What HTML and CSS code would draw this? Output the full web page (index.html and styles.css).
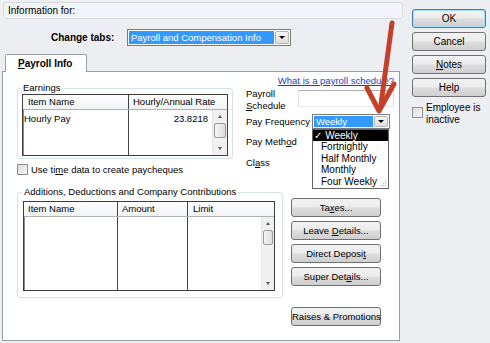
FILE: index.html
```html
<!DOCTYPE html>
<html lang="en">
<head>
  <meta charset="UTF-8" />
  <title>Payroll Info</title>
  <link rel="stylesheet" href="styles.css">
</head>
<body>
  <div class="window">
    <div class="main">
      <div class="info-bar">Information for:</div>

      <div class="change-row">
        <span class="change-label">Change tabs:</span>
        <div class="combo combo-tabs">
          <span class="combo-value">Payroll and Compensation Info</span>
          <span class="combo-btn"><i class="tri"></i></span>
        </div>
      </div>

      <div class="tab"><u>P</u>ayroll Info</div>

      <div class="panel">
        <div class="upper">
          <div class="left-col">
            <fieldset class="group earnings">
              <legend>Earnings</legend>
              <div class="list">
                <div class="list-head">
                  <div class="cell e-item">Item Name</div>
                  <div class="cell e-rate">Hourly/Annual Rate</div>
                </div>
                <div class="list-body">
                  <div class="col e-item"><div class="row">Hourly Pay</div></div>
                  <div class="col e-rate"><div class="row num">23.8218</div></div>
                  <div class="scrollbar">
                    <span class="sb-arrow"><i class="tri-up"></i></span>
                    <span class="sb-thumb"></span>
                    <span class="sb-fill"></span>
                    <span class="sb-arrow"><i class="tri-down"></i></span>
                  </div>
                </div>
              </div>
            </fieldset>
            <div class="check-row">
              <span class="checkbox"></span>
              <span>Use ti<u>m</u>e data to create paycheques</span>
            </div>
          </div>

          <div class="fields">
            <a class="help-link">What is a payroll schedule?</a>
            <div class="field schedule-field">
              <span class="field-label">Payroll<br><u>S</u>chedule</span>
              <div class="textbox"></div>
            </div>
            <div class="field freq-field">
              <span class="field-label">Pay Frequency</span>
              <div class="combo combo-freq">
                <span class="combo-value">Weekly</span>
                <span class="combo-btn"><i class="tri"></i></span>
                <ul class="dropdown">
                  <li class="selected">✓ Weekly</li>
                  <li>Fortnightly</li>
                  <li>Half Monthly</li>
                  <li>Monthly</li>
                  <li>Four Weekly</li>
                  <svg class="grip" width="7" height="7" viewBox="0 0 7 7">
                    <rect x="5" y="1" width="1" height="1" fill="#b5b5b5"/>
                    <rect x="3" y="3" width="1" height="1" fill="#b5b5b5"/>
                    <rect x="5" y="3" width="1" height="1" fill="#b5b5b5"/>
                    <rect x="1" y="5" width="1" height="1" fill="#b5b5b5"/>
                    <rect x="3" y="5" width="1" height="1" fill="#b5b5b5"/>
                    <rect x="5" y="5" width="1" height="1" fill="#b5b5b5"/>
                  </svg>
                </ul>
              </div>
            </div>
            <div class="field method-field"><span class="field-label">Pay Meth<u>o</u>d</span></div>
            <div class="field class-field"><span class="field-label">Cl<u>a</u>ss</span></div>
          </div>
        </div>

        <div class="lower">
          <fieldset class="group additions">
            <legend>Additions, Deductions and Company Contributions</legend>
            <div class="list">
              <div class="list-head">
                <div class="cell a-item">Item Name</div>
                <div class="cell a-amount">Amount</div>
                <div class="cell a-limit">Limit</div>
              </div>
              <div class="list-body">
                <div class="col a-item"></div>
                <div class="col a-amount"></div>
                <div class="col a-limit"></div>
                <div class="scrollbar narrow">
                  <span class="sb-arrow"><i class="tri-up"></i></span>
                  <span class="sb-thumb"></span>
                  <span class="sb-fill"></span>
                  <span class="sb-arrow"><i class="tri-down"></i></span>
                </div>
              </div>
            </div>
          </fieldset>

          <div class="btn-col">
            <button class="btn">Ta<u>x</u>es...</button>
            <button class="btn">Leave <u>D</u>etails...</button>
            <button class="btn">Direct Deposi<u>t</u></button>
            <button class="btn">Super Det<u>a</u>ils...</button>
            <button class="btn btn-raises">Raises &amp; Promotions</button>
          </div>
        </div>
      </div>
    </div>

    <div class="side">
      <button class="btn btn-default">OK</button>
      <button class="btn">Cancel</button>
      <button class="btn"><u>N</u>otes</button>
      <button class="btn">Help</button>
      <div class="check-row side-check">
        <span class="checkbox"></span>
        <span>Employee is<br>inactive</span>
      </div>
    </div>
  </div>

  <!-- red annotation arrow -->
  <svg class="arrow" width="490" height="343" viewBox="0 0 490 343">
    <path d="M392 23 L381 104" stroke="#c4402b" stroke-width="5" stroke-linecap="round" fill="none"/>
    <path d="M367 88 L379 111 L394 84" stroke="#c4402b" stroke-width="5" stroke-linecap="round" stroke-linejoin="round" fill="none"/>
  </svg>
</body>
</html>
```

FILE: styles.css
```css
body {
  margin: 0;
  font-family: "Liberation Sans", "DejaVu Sans", sans-serif;
  font-size: 9.5px;
  color: #000;
  background: #eceef2;
  white-space: nowrap;
}

.window {
  display: flex;
  padding: 2px 0 0 2px;
}

.main {
  width: 398px;
}

.info-bar {
  width: 400px;
  height: 17px;
  box-sizing: border-box;
  margin-left: 1px;
  padding-left: 4px;
  line-height: 15px;
  font-size: 10px;
  border: 1px solid #d9dde3;
  border-radius: 3px;
  background: #f1f3f6;
}

.change-row {
  display: flex;
  align-items: center;
  height: 17px;
  margin-top: 10px;
  padding-left: 49px;
}

.change-label {
  width: 76px;
  font-size: 10px;
  font-weight: bold;
}

.combo {
  position: relative;
  display: flex;
  box-sizing: border-box;
  padding: 1px;
  border: 1px solid #7b7b7b;
  background: #fff;
}

.combo-tabs {
  width: 164px;
  height: 17px;
}

.combo-freq {
  width: 78px;
  height: 15px;
}

.combo-value {
  flex: 1;
  padding-left: 2px;
  background: #3399ff;
  color: #fff;
  line-height: 13px;
}

.combo-freq .combo-value {
  line-height: 11px;
}

.combo-btn {
  display: flex;
  align-items: center;
  justify-content: center;
  width: 14px;
  margin-left: 1px;
  box-sizing: border-box;
  border: 1px solid #b4b4b4;
  border-radius: 2px;
  background: linear-gradient(#f6f6f6, #dedede);
}

.tri {
  border-left: 3px solid transparent;
  border-right: 3px solid transparent;
  border-top: 3px solid #000;
}

.tab {
  position: relative;
  width: 82px;
  height: 18px;
  box-sizing: border-box;
  margin: 8px 0 -1px 3px;
  padding-left: 12px;
  line-height: 17px;
  font-size: 10px;
  font-weight: bold;
  border: 1px solid #989ca3;
  border-bottom: none;
  border-radius: 2px 2px 0 0;
  background: #fff;
}

.panel {
  height: 270px;
  box-sizing: border-box;
  padding-left: 14px;
  border: 1px solid #989ca3;
  background: #fff;
}

.upper {
  display: flex;
  align-items: flex-start;
}

.left-col {
  width: 216px;
  margin-top: 10px;
}

.group {
  margin: 0;
  min-width: 0;
  box-sizing: border-box;
  border: 1px solid #d5dfe5;
  border-radius: 3px;
}

.group legend {
  padding: 0 2px;
  margin-left: -1px;
  line-height: 12px;
}

.earnings {
  width: 216px;
  padding: 0 4px 2px 4px;
}

.additions {
  width: 266px;
  padding: 3px 7px 6px 5px;
}

.list {
  border: 1px solid #3d3d3d;
  box-shadow: inset 1px 1px 0 #8a8a8a;
  background: #fff;
}

.earnings .list {
  height: 62px;
  box-sizing: border-box;
}

.additions .list {
  height: 90px;
  box-sizing: border-box;
}

.list-head {
  display: flex;
  height: 15px;
  box-sizing: border-box;
  border-bottom: 1px solid #b0b0b0;
  background: linear-gradient(#ffffff, #f1f2f4);
  line-height: 14px;
}

.list-body {
  display: flex;
  height: calc(100% - 15px);
}

.cell {
  box-sizing: border-box;
  padding-left: 4px;
  overflow: hidden;
}

.col {
  box-sizing: border-box;
}

.e-item {
  width: 106px;
  border-right: 1px solid #444;
}

.list-head .e-item {
  padding-left: 5px;
}

.e-rate {
  flex: 1;
}

.a-item {
  width: 94px;
  border-right: 1px solid #444;
}

.a-amount {
  width: 70px;
  border-right: 1px solid #444;
}

.a-limit {
  flex: 1;
}

.list-head .a-limit {
  padding-left: 5px;
}

.row {
  padding: 2px 0 0 1px;
  line-height: 13px;
}

.row.num {
  padding-right: 4px;
  text-align: right;
}

.scrollbar {
  display: flex;
  flex-direction: column;
  width: 14px;
  background: #f0f0f0;
  border-left: 1px solid #e4e4e4;
}

.scrollbar.narrow {
  width: 12px;
}

.sb-arrow {
  display: flex;
  align-items: center;
  justify-content: center;
  height: 13px;
}

.sb-thumb {
  height: 13px;
  margin: 0 1px;
  border: 1px solid #9a9a9a;
  border-radius: 2px;
  background: linear-gradient(to right, #f4f4f4, #dcdcdc);
}

.sb-fill {
  flex: 1;
}

.tri-up {
  border-left: 2.5px solid transparent;
  border-right: 2.5px solid transparent;
  border-bottom: 3px solid #555;
}

.tri-down {
  border-left: 2.5px solid transparent;
  border-right: 2.5px solid transparent;
  border-top: 3px solid #555;
}

.check-row {
  display: flex;
  align-items: center;
  gap: 3px;
  height: 11px;
  margin-top: 5px;
}

.checkbox {
  width: 11px;
  height: 11px;
  box-sizing: border-box;
  border: 1px solid #8f8f8f;
  background: linear-gradient(135deg, #dcdcdc, #f7f7f7);
}

.fields {
  width: 148px;
  margin-left: 13px;
}

.help-link {
  display: block;
  margin-top: 3px;
  line-height: 12px;
  text-align: right;
  color: #1b3ec2;
  text-decoration: underline;
}

.field {
  display: flex;
  align-items: flex-start;
}

.field-label {
  line-height: 12px;
}

.schedule-field {
  margin-top: 1px;
}

.schedule-field .field-label {
  width: 52px;
}

.textbox {
  width: 96px;
  height: 17px;
  box-sizing: border-box;
  margin-top: 2px;
  border: 1px solid #abadb3;
  border-color: #abadb3 #dbdfe6 #e3e9ef #e2e3ea;
  background: #fff;
}

.freq-field {
  margin-top: 2px;
}

.freq-field .field-label {
  width: 66px;
  padding-top: 2px;
}

.method-field {
  margin-top: 7px;
}

.class-field {
  margin-top: 9px;
}

.dropdown {
  position: absolute;
  top: 14px;
  left: -1px;
  width: 77px;
  height: 60px;
  box-sizing: border-box;
  margin: 0;
  padding: 0;
  list-style: none;
  border: 1px solid #646464;
  background: #fff;
}

.dropdown li {
  height: 11.4px;
  padding-left: 8px;
  line-height: 11.4px;
  font-size: 10px;
}

.dropdown li.selected {
  padding-left: 1px;
  background: #000;
  color: #fff;
}

.grip {
  position: absolute;
  right: 1px;
  bottom: 1px;
}

.lower {
  display: flex;
  align-items: flex-start;
  margin-top: 11px;
}

.btn-col {
  display: flex;
  flex-direction: column;
  gap: 4px;
  margin: 12px 0 0 8px;
}

.btn {
  width: 90px;
  height: 19px;
  padding: 0;
  font-family: inherit;
  font-size: 9.5px;
  color: #000;
  white-space: nowrap;
  border: 1px solid #707070;
  border-radius: 3px;
  background: linear-gradient(#f3f3f3 0%, #ebebeb 48%, #dddddd 52%, #cfcfcf 100%);
}

.btn-raises {
  margin-top: 17px;
}

.side {
  display: flex;
  flex-direction: column;
  gap: 4px;
  width: 74px;
  margin: 7px 0 0 12px;
}

.side .btn {
  width: 74px;
  font-size: 10px;
}

.btn-default {
  border-color: #3c7fb1;
  box-shadow: inset 0 0 0 1px #a9dcf7;
}

.side-check {
  align-items: flex-start;
  height: auto;
  margin-top: 1px;
  line-height: 12px;
  font-size: 10px;
}

.side-check .checkbox {
  margin-top: 5px;
}

.arrow {
  position: absolute;
  top: 0;
  left: 0;
  pointer-events: none;
}
```
